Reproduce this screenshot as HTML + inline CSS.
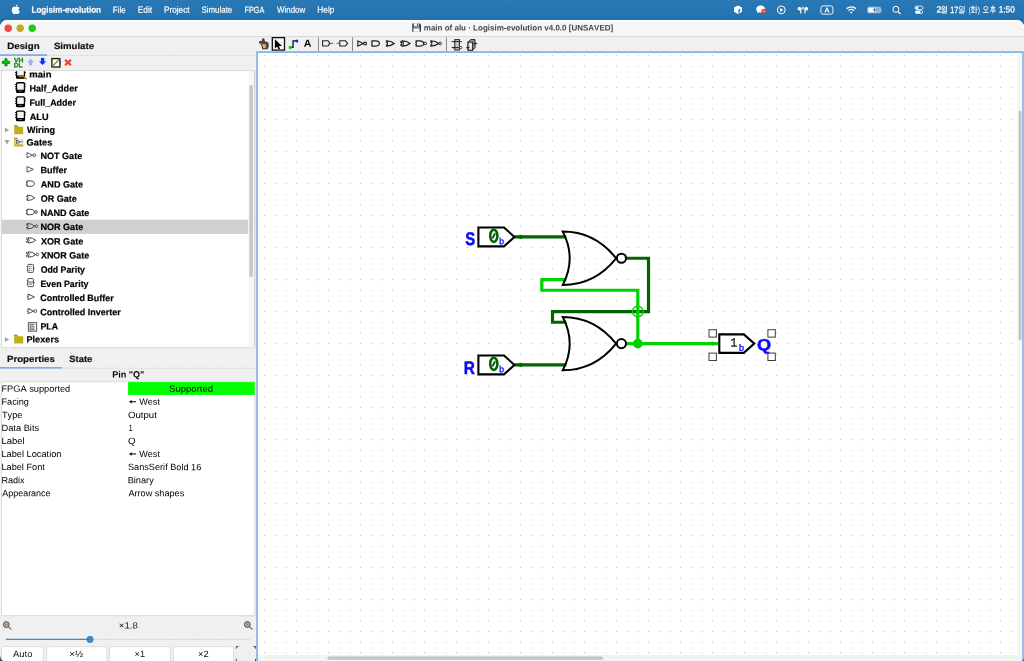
<!DOCTYPE html>
<html><head><meta charset="utf-8">
<style>
html,body{margin:0;padding:0;}
body{width:1024px;height:661px;overflow:hidden;background:#2672ae;font-family:"Liberation Sans",sans-serif;position:relative;}
svg{position:absolute;left:0;top:0;will-change:transform;}
text{font-kerning:none;}
</style></head><body>
<svg width="1024" height="661" viewBox="0 0 1024 661">
<defs><linearGradient id="mbg" x1="0" y1="0" x2="0" y2="1"><stop offset="0" stop-color="#2979b6"/><stop offset="1" stop-color="#2471ad"/></linearGradient></defs>
<rect x="0.00" y="0.00" width="1024.00" height="20.50" fill="url(#mbg)" />
<rect x="0.00" y="20.00" width="1024.00" height="641.00" fill="#2471ad" />
<path d="M0 661 V27.5 A7.5 7.5 0 0 1 7.5 20 H1016.5 A7.5 7.5 0 0 1 1024 27.5 V661 Z" fill="#f0f0f0"/>
<path d="M0 36 V27.5 A7.5 7.5 0 0 1 7.5 20 H1016.5 A7.5 7.5 0 0 1 1024 27.5 V36 Z" fill="#f5f6f5"/>
<path d="M0.5 27.5 A7 7 0 0 1 7.5 20.6 H1016.5 A7 7 0 0 1 1023.5 27.5" fill="none" stroke="#ffffff" stroke-width="1.2"/>
<rect x="0.00" y="36.00" width="1024.00" height="1.00" fill="#dadada" />
<text transform="translate(31.46 12.70) rotate(0.03) scale(0.8986 1)" font-size="9.0" font-weight="bold" fill="#fff" font-family="Liberation Sans" stroke="#fff" stroke-width="0.18">Logisim-evolution</text>
<text transform="translate(112.85 12.70) rotate(0.03) scale(0.8755 1)" font-size="9.0" font-weight="normal" fill="#fff" font-family="Liberation Sans" stroke="#fff" stroke-width="0.18">File</text>
<text transform="translate(137.72 12.70) rotate(0.03) scale(0.9249 1)" font-size="9.0" font-weight="normal" fill="#fff" font-family="Liberation Sans" stroke="#fff" stroke-width="0.18">Edit</text>
<text transform="translate(163.92 12.70) rotate(0.03) scale(0.9189 1)" font-size="9.0" font-weight="normal" fill="#fff" font-family="Liberation Sans" stroke="#fff" stroke-width="0.18">Project</text>
<text transform="translate(201.44 12.70) rotate(0.03) scale(0.8829 1)" font-size="9.0" font-weight="normal" fill="#fff" font-family="Liberation Sans" stroke="#fff" stroke-width="0.18">Simulate</text>
<text transform="translate(244.50 12.70) rotate(0.03) scale(0.8085 1)" font-size="9.0" font-weight="normal" fill="#fff" font-family="Liberation Sans" stroke="#fff" stroke-width="0.18">FPGA</text>
<text transform="translate(276.97 12.70) rotate(0.03) scale(0.8846 1)" font-size="9.0" font-weight="normal" fill="#fff" font-family="Liberation Sans" stroke="#fff" stroke-width="0.18">Window</text>
<text transform="translate(317.32 12.70) rotate(0.03) scale(0.9199 1)" font-size="9.0" font-weight="normal" fill="#fff" font-family="Liberation Sans" stroke="#fff" stroke-width="0.18">Help</text>
<text transform="translate(998.67 12.50) rotate(0.03) scale(0.9224 1)" font-size="9.0" font-weight="normal" fill="#fff" font-family="Liberation Sans" stroke="#fff" stroke-width="0.25">1:50</text>
<circle cx="8.2" cy="28.2" r="3.7" fill="#ee4b3e"/>
<circle cx="20.2" cy="28.2" r="3.7" fill="#c3a72b"/>
<circle cx="32.2" cy="28.2" r="3.7" fill="#1fc81f"/>
<text transform="translate(423.77 30.40) rotate(0.03) scale(0.9778 1)" font-size="8.2" font-weight="bold" fill="#454545" font-family="Liberation Sans" >main of alu · Logisim-evolution v4.0.0 [UNSAVED]</text>
<text transform="translate(7.25 49.00) rotate(0.03) scale(1.0782 1)" font-size="9.0" font-weight="bold" fill="#111" font-family="Liberation Sans" stroke="#111" stroke-width="0.2">Design</text>
<text transform="translate(53.92 49.00) rotate(0.03) scale(1.0705 1)" font-size="9.0" font-weight="bold" fill="#111" font-family="Liberation Sans" stroke="#111" stroke-width="0.2">Simulate</text>
<rect x="0.00" y="54.20" width="47.00" height="1.80" fill="#82aee0" />
<line x1="47" y1="55.6" x2="256" y2="55.6" stroke="#d2d2d2" stroke-width="0.8" stroke-dasharray="1.4 0.8"/>
<rect x="0.00" y="71.00" width="2.00" height="277.00" fill="#f8f8f8" />
<rect x="1.40" y="70.60" width="253.40" height="277.10" fill="#ffffff" stroke="#d6d6d6" stroke-width="0.9"/>
<rect x="1.80" y="219.75" width="246.50" height="14.17" fill="#d0d0d0" />
<rect x="248.50" y="71.00" width="5.60" height="276.30" fill="#f7f7f7" />
<rect x="249.3" y="85.1" width="3.6" height="192" rx="1.8" fill="#c6c6c6"/>
<clipPath id="treeclip"><rect x="1.5" y="71.2" width="247" height="276"/></clipPath><g clip-path="url(#treeclip)">
<text transform="translate(29.37 77.40) rotate(0.03) scale(1.0347 1)" font-size="9.2" font-weight="bold" fill="#000" font-family="Liberation Sans" stroke="#000" stroke-width="0.2">main</text>
<text transform="translate(29.39 91.60) rotate(0.03) scale(0.9850 1)" font-size="9.2" font-weight="bold" fill="#000" font-family="Liberation Sans" stroke="#000" stroke-width="0.2">Half_Adder</text>
<text transform="translate(29.40 105.70) rotate(0.03) scale(0.9684 1)" font-size="9.2" font-weight="bold" fill="#000" font-family="Liberation Sans" stroke="#000" stroke-width="0.2">Full_Adder</text>
<text transform="translate(29.77 119.90) rotate(0.03) scale(0.9935 1)" font-size="9.2" font-weight="bold" fill="#000" font-family="Liberation Sans" stroke="#000" stroke-width="0.2">ALU</text>
<text transform="translate(26.99 133.10) rotate(0.03) scale(0.9825 1)" font-size="9.2" font-weight="bold" fill="#000" font-family="Liberation Sans" stroke="#000" stroke-width="0.2">Wiring</text>
<text transform="translate(26.62 145.60) rotate(0.03) scale(1.0075 1)" font-size="9.2" font-weight="bold" fill="#000" font-family="Liberation Sans" stroke="#000" stroke-width="0.2">Gates</text>
<text transform="translate(40.39 159.10) rotate(0.03) scale(0.9880 1)" font-size="9.2" font-weight="bold" fill="#000" font-family="Liberation Sans" stroke="#000" stroke-width="0.2">NOT Gate</text>
<text transform="translate(40.39 173.30) rotate(0.03) scale(0.9873 1)" font-size="9.2" font-weight="bold" fill="#000" font-family="Liberation Sans" stroke="#000" stroke-width="0.2">Buffer</text>
<text transform="translate(40.77 187.60) rotate(0.03) scale(0.9906 1)" font-size="9.2" font-weight="bold" fill="#000" font-family="Liberation Sans" stroke="#000" stroke-width="0.2">AND Gate</text>
<text transform="translate(40.63 201.80) rotate(0.03) scale(0.9829 1)" font-size="9.2" font-weight="bold" fill="#000" font-family="Liberation Sans" stroke="#000" stroke-width="0.2">OR Gate</text>
<text transform="translate(40.39 215.90) rotate(0.03) scale(0.9865 1)" font-size="9.2" font-weight="bold" fill="#000" font-family="Liberation Sans" stroke="#000" stroke-width="0.2">NAND Gate</text>
<text transform="translate(40.39 230.10) rotate(0.03) scale(0.9877 1)" font-size="9.2" font-weight="bold" fill="#000" font-family="Liberation Sans" stroke="#000" stroke-width="0.2">NOR Gate</text>
<text transform="translate(40.92 244.40) rotate(0.03) scale(0.9871 1)" font-size="9.2" font-weight="bold" fill="#000" font-family="Liberation Sans" stroke="#000" stroke-width="0.2">XOR Gate</text>
<text transform="translate(40.92 258.60) rotate(0.03) scale(0.9757 1)" font-size="9.2" font-weight="bold" fill="#000" font-family="Liberation Sans" stroke="#000" stroke-width="0.2">XNOR Gate</text>
<text transform="translate(40.64 272.80) rotate(0.03) scale(0.9546 1)" font-size="9.2" font-weight="bold" fill="#000" font-family="Liberation Sans" stroke="#000" stroke-width="0.2">Odd Parity</text>
<text transform="translate(40.41 286.90) rotate(0.03) scale(0.9606 1)" font-size="9.2" font-weight="bold" fill="#000" font-family="Liberation Sans" stroke="#000" stroke-width="0.2">Even Parity</text>
<text transform="translate(40.23 301.10) rotate(0.03) scale(0.9717 1)" font-size="9.2" font-weight="bold" fill="#000" font-family="Liberation Sans" stroke="#000" stroke-width="0.2">Controlled Buffer</text>
<text transform="translate(40.23 315.30) rotate(0.03) scale(0.9782 1)" font-size="9.2" font-weight="bold" fill="#000" font-family="Liberation Sans" stroke="#000" stroke-width="0.2">Controlled Inverter</text>
<text transform="translate(40.41 329.50) rotate(0.03) scale(0.9577 1)" font-size="9.2" font-weight="bold" fill="#000" font-family="Liberation Sans" stroke="#000" stroke-width="0.2">PLA</text>
<text transform="translate(26.39 342.60) rotate(0.03) scale(0.9985 1)" font-size="9.2" font-weight="bold" fill="#000" font-family="Liberation Sans" stroke="#000" stroke-width="0.2">Plexers</text>
</g>
<rect x="254.20" y="71.00" width="0.90" height="276.50" fill="#d2d2d2" />
<text transform="translate(6.95 362.00) rotate(0.03) scale(1.0770 1)" font-size="9.0" font-weight="bold" fill="#111" font-family="Liberation Sans" stroke="#111" stroke-width="0.2">Properties</text>
<text transform="translate(69.23 362.00) rotate(0.03) scale(1.0494 1)" font-size="9.0" font-weight="bold" fill="#111" font-family="Liberation Sans" stroke="#111" stroke-width="0.2">State</text>
<rect x="0.00" y="367.00" width="62.00" height="1.70" fill="#82aee0" />
<line x1="62" y1="368.2" x2="256" y2="368.2" stroke="#d2d2d2" stroke-width="0.8" stroke-dasharray="1.4 0.8"/>
<text transform="translate(112.20 377.60) rotate(0.03) scale(0.9817 1)" font-size="9.2" font-weight="bold" fill="#000" font-family="Liberation Sans" >Pin &quot;Q&quot;</text>
<rect x="0.00" y="382.00" width="2.00" height="233.50" fill="#f8f8f8" />
<rect x="1.40" y="381.70" width="253.40" height="234.00" fill="#ffffff" stroke="#d6d6d6" stroke-width="0.9"/>
<rect x="128.10" y="382.10" width="126.60" height="12.80" fill="#00ff00" />
<text transform="translate(1.44 391.80) rotate(0.03) scale(1.0174 1)" font-size="9.1" font-weight="normal" fill="#000" font-family="Liberation Sans" >FPGA supported</text>
<text transform="translate(169.07 391.80) rotate(0.03) scale(1.0489 1)" font-size="9.1" font-weight="normal" fill="#000" font-family="Liberation Sans" >Supported</text>
<text transform="translate(1.45 404.85) rotate(0.03) scale(1.0085 1)" font-size="9.1" font-weight="normal" fill="#000" font-family="Liberation Sans" >Facing</text>
<text transform="translate(139.26 404.85) rotate(0.03) scale(0.9990 1)" font-size="9.1" font-weight="normal" fill="#000" font-family="Liberation Sans" >West</text>
<path d="M129 401.75 L131.6 399.95 V403.55 Z" fill="#000"/><line x1="131" y1="401.75" x2="136.1" y2="401.75" stroke="#000" stroke-width="1"/>
<text transform="translate(1.99 417.90) rotate(0.03) scale(1.0091 1)" font-size="9.1" font-weight="normal" fill="#000" font-family="Liberation Sans" >Type</text>
<text transform="translate(127.94 417.90) rotate(0.03) scale(1.0626 1)" font-size="9.1" font-weight="normal" fill="#000" font-family="Liberation Sans" >Output</text>
<text transform="translate(1.44 430.95) rotate(0.03) scale(1.0211 1)" font-size="9.1" font-weight="normal" fill="#000" font-family="Liberation Sans" >Data Bits</text>
<text transform="translate(128.67 430.95) rotate(0.03) scale(0.7646 1)" font-size="9.1" font-weight="normal" fill="#000" font-family="Liberation Sans" >1</text>
<text transform="translate(1.42 444.00) rotate(0.03) scale(1.0473 1)" font-size="9.1" font-weight="normal" fill="#000" font-family="Liberation Sans" >Label</text>
<text transform="translate(127.94 444.00) rotate(0.03) scale(1.0625 1)" font-size="9.1" font-weight="normal" fill="#000" font-family="Liberation Sans" >Q</text>
<text transform="translate(1.44 457.05) rotate(0.03) scale(1.0145 1)" font-size="9.1" font-weight="normal" fill="#000" font-family="Liberation Sans" >Label Location</text>
<text transform="translate(139.26 457.05) rotate(0.03) scale(0.9990 1)" font-size="9.1" font-weight="normal" fill="#000" font-family="Liberation Sans" >West</text>
<path d="M129 453.95 L131.6 452.15 V455.75 Z" fill="#000"/><line x1="131" y1="453.95" x2="136.1" y2="453.95" stroke="#000" stroke-width="1"/>
<text transform="translate(1.44 470.10) rotate(0.03) scale(1.0121 1)" font-size="9.1" font-weight="normal" fill="#000" font-family="Liberation Sans" >Label Font</text>
<text transform="translate(127.98 470.10) rotate(0.03) scale(1.0079 1)" font-size="9.1" font-weight="normal" fill="#000" font-family="Liberation Sans" >SansSerif Bold 16</text>
<text transform="translate(1.45 483.15) rotate(0.03) scale(0.9991 1)" font-size="9.1" font-weight="normal" fill="#000" font-family="Liberation Sans" >Radix</text>
<text transform="translate(127.64 483.15) rotate(0.03) scale(1.0148 1)" font-size="9.1" font-weight="normal" fill="#000" font-family="Liberation Sans" >Binary</text>
<text transform="translate(2.18 496.20) rotate(0.03) scale(0.9876 1)" font-size="9.1" font-weight="normal" fill="#000" font-family="Liberation Sans" >Appearance</text>
<text transform="translate(128.38 496.20) rotate(0.03) scale(1.0056 1)" font-size="9.1" font-weight="normal" fill="#000" font-family="Liberation Sans" >Arrow shapes</text>
<rect x="257.10" y="52.10" width="765.80" height="612.00" fill="#ffffff" stroke="#88b4e2" stroke-width="1.8"/>
<defs><pattern id="grid" x="264.000" y="55.100" width="10.6667" height="10.6667" patternUnits="userSpaceOnUse"><rect x="0" y="0" width="1.05" height="1.05" fill="#c2c2c2"/></pattern></defs>
<rect x="258" y="53" width="759" height="602" fill="url(#grid)"/>
<rect x="1017.00" y="53.00" width="5.20" height="602.00" fill="#f6f6f6" />
<rect x="1018.6" y="110.4" width="3" height="229.6" rx="1.5" fill="#c4c4c4"/>
<rect x="258.00" y="655.00" width="764.20" height="6.00" fill="#f3f3f3" />
<rect x="327.4" y="656.6" width="275.6" height="3.2" rx="1.6" fill="#c4c4c4"/>
<path d="M516.00 236.93 L564.67 236.93" stroke="#006400" fill="none" stroke-width="3.2" stroke-linecap="square" stroke-linejoin="miter"/>
<circle cx="520.50" cy="236.93" r="2.1" fill="#006400"/>
<path d="M516.00 364.93 L564.67 364.93" stroke="#006400" fill="none" stroke-width="3.2" stroke-linecap="square" stroke-linejoin="miter"/>
<circle cx="520.50" cy="364.93" r="2.1" fill="#006400"/>
<path d="M627.17 258.27 L648.50 258.27 L648.50 311.60 L552.50 311.60 L552.50 322.27 L564.67 322.27" stroke="#006400" fill="none" stroke-width="3.2" stroke-linecap="square" stroke-linejoin="miter"/>
<path d="M627.17 343.60 L718.00 343.60" stroke="#00d200" fill="none" stroke-width="3.2" stroke-linecap="square" stroke-linejoin="miter"/>
<path d="M637.83 343.60 L637.83 290.27 L541.83 290.27 L541.83 279.60 L564.67 279.60" stroke="#00d200" fill="none" stroke-width="3.2" stroke-linecap="square" stroke-linejoin="miter"/>
<circle cx="637.83" cy="343.60" r="4.9" fill="#00d200"/>
<circle cx="637.83" cy="311.60" r="5.3" fill="none" stroke="#00d200" stroke-width="1.4"/>
<circle cx="712.50" cy="343.60" r="2.1" fill="#00d200"/>
<path d="M616.10 258.27 Q594.77 231.60 562.77 231.60 Q576.63 258.27 562.77 284.93 Q594.77 284.93 616.10 258.27 Z" stroke="#000" fill="none" stroke-width="2.0" stroke-linejoin="miter"/>
<circle cx="621.43" cy="258.27" r="4.6" fill="#fff" stroke="#000" stroke-width="2.0"/>
<path d="M616.10 343.60 Q594.77 316.93 562.77 316.93 Q576.63 343.60 562.77 370.27 Q594.77 370.27 616.10 343.60 Z" stroke="#000" fill="none" stroke-width="2.0" stroke-linejoin="miter"/>
<circle cx="621.43" cy="343.60" r="4.6" fill="#fff" stroke="#000" stroke-width="2.0"/>
<path d="M478.4 227.53 H504.0 L514.4 236.93 L504.0 246.33 H478.4 Z" stroke="#000" fill="#fff" stroke-width="2.1" stroke-linejoin="miter"/>
<ellipse cx="493.8" cy="235.83" rx="3.6" ry="6.1" fill="#fff" stroke="#006400" stroke-width="2.6"/>
<line x1="492.6" y1="238.33" x2="495.0" y2="233.33" stroke="#006400" stroke-width="2.1"/>
<text transform="translate(499.24 244.13) rotate(0.03) scale(0.9636 1)" font-size="9" font-weight="normal" fill="#0a0aff" font-family="Liberation Sans" stroke="#0a0aff" stroke-width="0.35">b</text>
<text transform="translate(465.37 245.30) rotate(0.03) scale(0.8118 1)" font-size="18.3" font-weight="bold" fill="#0a0aff" font-family="Liberation Sans" stroke="#0a0aff" stroke-width="0.5">S</text>
<path d="M478.4 355.53 H504.0 L514.4 364.93 L504.0 374.33 H478.4 Z" stroke="#000" fill="#fff" stroke-width="2.1" stroke-linejoin="miter"/>
<ellipse cx="493.8" cy="363.83" rx="3.6" ry="6.1" fill="#fff" stroke="#006400" stroke-width="2.6"/>
<line x1="492.6" y1="366.33" x2="495.0" y2="361.33" stroke="#006400" stroke-width="2.1"/>
<text transform="translate(499.24 372.13) rotate(0.03) scale(0.9636 1)" font-size="9" font-weight="normal" fill="#0a0aff" font-family="Liberation Sans" stroke="#0a0aff" stroke-width="0.35">b</text>
<text transform="translate(463.87 373.60) rotate(0.03) scale(0.8436 1)" font-size="18.3" font-weight="bold" fill="#0a0aff" font-family="Liberation Sans" stroke="#0a0aff" stroke-width="0.5">R</text>
<path d="M719.3 334.35 H743.8 L754.3 343.60 L743.8 352.85 H719.3 Z" stroke="#000" fill="#fff" stroke-width="2.1" stroke-linejoin="miter"/>
<text transform="translate(730.50 346.60) rotate(0.03) scale(0.8773 1)" font-size="12.6" font-weight="normal" fill="#222" font-family="Liberation Mono" stroke="#222" stroke-width="0.4">1</text>
<text transform="translate(739.01 350.70) rotate(0.03) scale(1.0130 1)" font-size="9" font-weight="normal" fill="#0a0aff" font-family="Liberation Sans" stroke="#0a0aff" stroke-width="0.35">b</text>
<text transform="translate(757.06 350.50) rotate(0.03) scale(1.0924 1)" font-size="16.6" font-weight="bold" fill="#0a0aff" font-family="Liberation Sans" stroke="#0a0aff" stroke-width="0.5">Q</text>
<rect x="709.00" y="329.70" width="7.40" height="7.40" fill="#fff" stroke="#3c3c3c" stroke-width="1"/>
<rect x="709.00" y="353.10" width="7.40" height="7.40" fill="#fff" stroke="#3c3c3c" stroke-width="1"/>
<rect x="767.90" y="329.70" width="7.40" height="7.40" fill="#fff" stroke="#3c3c3c" stroke-width="1"/>
<rect x="767.90" y="353.10" width="7.40" height="7.40" fill="#fff" stroke="#3c3c3c" stroke-width="1"/>
<g>
<path d="M261.8 44.6 L260 43.2 Q259 42.2 259.8 41.6 Q260.6 41.1 261.6 42 L262.5 42.9 V39.8 Q262.5 38.7 263.3 38.7 Q264.1 38.7 264.1 39.8 V42 Q265 41.5 265.6 42.3 Q266.6 41.9 267 42.8 Q268 42.7 268.1 43.8 V46.2 Q268 47.6 267.2 48.8 H262.8 Q262.2 46.6 261.8 44.6 Z" fill="#5a5040" stroke="#3a3a3a" stroke-width="1.1"/>
<path d="M262.2 44.2 H265.6 V48 H263.2 Z" fill="#e8b866"/>
<path d="M260.6 42.6 L262 44" stroke="#e0b060" stroke-width="0.7"/>
</g>
<rect x="272.30" y="37.60" width="12.20" height="12.50" fill="#f6f6f6" stroke="#111" stroke-width="1.3"/>
<path d="M274.9 39.2 V48.4 L277.2 46.5 L278.6 49.5 L280.1 48.8 L278.8 45.9 L282 45.9 Z" fill="#000"/>
<path d="M290.3 47.4 H293 V40.9 H296.8" fill="none" stroke="#111" stroke-width="1.3"/>
<circle cx="290.3" cy="47.4" r="1.7" fill="#00d200"/><circle cx="296.8" cy="40.9" r="1.5" fill="#0a1eff"/>
<text transform="translate(303.74 46.70) rotate(0.03) scale(1.0375 1)" font-size="10.2" font-weight="bold" fill="#000" font-family="Liberation Sans" >A</text>
<rect x="317.95" y="37.30" width="0.90" height="13.70" fill="#7c7c7c" />
<rect x="352.05" y="37.30" width="0.90" height="13.70" fill="#7c7c7c" />
<rect x="445.95" y="37.30" width="0.90" height="13.70" fill="#7c7c7c" />
<path d="M322.6 40.8 H328 L329.8 43.4 L328 46 H322.6 Z" fill="none" stroke="#222" stroke-width="1.1"/>
<line x1="330" y1="43.4" x2="333.2" y2="43.4" stroke="#00d200" stroke-width="1.3"/>
<line x1="336.6" y1="43.4" x2="339.6" y2="43.4" stroke="#00d200" stroke-width="1.3"/>
<path d="M339.8 40.8 H345.5 L347.6 43.4 L345.5 46 H339.8 Z" fill="none" stroke="#222" stroke-width="1.1"/>
<path d="M357.8 40.9 L363.40000000000003 43.5 L357.8 46.1 Z" fill="none" stroke="#1e1e1e" stroke-width="1.05"/><circle cx="365.1" cy="43.5" r="1.4" fill="none" stroke="#1e1e1e" stroke-width="1.05"/>
<path d="M372 40.9 H375.2 Q379.4 40.9 379.4 43.5 Q379.4 46.1 375.2 46.1 H372 Z" fill="none" stroke="#1e1e1e" stroke-width="1.1"/>
<path d="M386.6 40.9 Q391.20000000000005 40.9 394.20000000000005 43.5 Q391.20000000000005 46.1 386.6 46.1 Q388.40000000000003 43.5 386.6 40.9 Z" fill="none" stroke="#1e1e1e" stroke-width="1.1"/>
<path d="M402.4 40.9 Q407.0 40.9 410.0 43.5 Q407.0 46.1 402.4 46.1 Q404.2 43.5 402.4 40.9 Z" fill="none" stroke="#1e1e1e" stroke-width="1.1"/>
<path d="M400.79999999999995 40.9 Q402.59999999999997 43.5 400.79999999999995 46.1" fill="none" stroke="#1e1e1e" stroke-width="1.1"/>
<path d="M416.2 40.9 H419.4 Q423.59999999999997 40.9 423.59999999999997 43.5 Q423.59999999999997 46.1 419.4 46.1 H416.2 Z" fill="none" stroke="#1e1e1e" stroke-width="1.1"/>
<circle cx="425.2" cy="43.5" r="1.3" fill="none" stroke="#1e1e1e" stroke-width="0.9900000000000001"/>
<path d="M431 40.9 Q435.6 40.9 438.6 43.5 Q435.6 46.1 431 46.1 Q432.8 43.5 431 40.9 Z" fill="none" stroke="#1e1e1e" stroke-width="1.1"/>
<circle cx="440.1" cy="43.5" r="1.3" fill="none" stroke="#1e1e1e" stroke-width="0.9900000000000001"/>
<path d="M371 42.2 h1 M371 44.8 h1 M385.8 42.2 h1.4 M385.8 44.8 h1.4 M415.2 42.2 h1 M415.2 44.8 h1 M430.2 42.2 h1.4 M430.2 44.8 h1.4 M400 42.2 h1.4 M400 44.8 h1.4" stroke="#1e1e1e" stroke-width="0.9"/>
<g stroke="#222" fill="none">
<rect x="454.8" y="39.6" width="4.6" height="10.4" fill="#c8c8c8" stroke-width="1"/>
<line x1="451.6" y1="41.6" x2="461.8" y2="41.6" stroke-width="1"/>
<line x1="451.6" y1="47.6" x2="459.4" y2="47.6" stroke-width="1"/>
<path d="M453.2 46.4 L455 47.6 L453.2 48.8 Z" fill="#222" stroke="none"/>
<circle cx="460.7" cy="47.6" r="1.2" fill="#fff" stroke-width="0.8"/>
</g>
<g stroke="#222" fill="none">
<path d="M468 42.2 L470.6 39.6 H475 V47.6 L472.6 50.2 H468 Z" fill="#9a9a9a" stroke-width="1"/>
<rect x="468" y="42.2" width="4.6" height="8" fill="#e8e8e8" stroke-width="1"/>
<line x1="466.2" y1="47.7" x2="469.4" y2="47.7" stroke-width="1"/>
<path d="M467.8 46.6 L469.5 47.7 L467.8 48.8 Z" fill="#222" stroke="none"/>
<line x1="473.4" y1="43.6" x2="477" y2="43.6" stroke-width="1"/>
<path d="M475.4 42.5 L477.2 43.6 L475.4 44.7 Z" fill="#222" stroke="none"/>
</g>
<path d="M4.9 58.7 H7.1 V61.2 H9.7 V63.4 H7.1 V65.9 H4.9 V63.4 H2.3 V61.2 H4.9 Z" fill="#00c800" stroke="#0a6a0a" stroke-width="0.7"/>
<text transform="translate(13.95 62.30) rotate(0.03) scale(1.0864 1)" font-size="6.3" font-weight="bold" fill="#1e8c1e" font-family="Liberation Sans" stroke="#1e8c1e" stroke-width="0.3">VH</text>
<text transform="translate(13.76 67.20) rotate(0.03) scale(1.0536 1)" font-size="6.3" font-weight="bold" fill="#1e8c1e" font-family="Liberation Sans" stroke="#1e8c1e" stroke-width="0.3">DL</text>
<path d="M30.7 58.8 L34.2 62.2 H32.2 V65.6 H29.2 V62.2 H27.2 Z" fill="#8fb6ee"/>
<path d="M40.9 58.1 H44.3 V61.4 H46.2 L42.6 65.1 L39 61.4 H40.9 Z" fill="#0a32ff"/>
<rect x="51.90" y="58.60" width="8.00" height="8.40" fill="#fff" stroke="#111" stroke-width="1.3"/>
<line x1="52.2" y1="66.6" x2="59.6" y2="59" stroke="#a0641e" stroke-width="1.1"/>
<circle cx="52.4" cy="62.8" r="0.8" fill="#00c800"/><rect x="59.3" y="60.2" width="1" height="3.8" fill="#0a32ff"/>
<path d="M65.9 58.9 L68 60.9 L70.1 58.9 L71.7 60.5 L69.7 62.5 L71.7 64.5 L70.1 66.1 L68 64.1 L65.9 66.1 L64.3 64.5 L66.3 62.5 L64.3 60.5 Z" fill="#f04232"/>
<g clip-path="url(#treeclip)">
<g><rect x="16.55" y="68.55000000000001" width="7.9" height="9.6" rx="1" fill="#f4f4f4" stroke="#000" stroke-width="1.3"/><rect x="16.5" y="75.5" width="8" height="2.8" fill="#000"/><rect x="18.5" y="76.5" width="3.8" height="0.7" fill="#8c8c8c"/><rect x="15.0" y="69.7" width="1.2" height="0.9" fill="#000"/><rect x="15.0" y="72.10000000000001" width="1.2" height="0.9" fill="#000"/><rect x="15.0" y="74.4" width="1.2" height="0.9" fill="#000"/><rect x="24.8" y="69.5" width="1.0" height="0.9" fill="#000"/><rect x="24.8" y="71.9" width="1.0" height="0.9" fill="#000"/></g>
<path d="M19.2 76.4 H23.6 L26.7 79.2" fill="none" stroke="#b87214" stroke-width="1.3"/>
<g><rect x="16.55" y="82.75" width="7.9" height="9.6" rx="1" fill="#f4f4f4" stroke="#000" stroke-width="1.3"/><rect x="16.5" y="89.69999999999999" width="8" height="2.8" fill="#000"/><rect x="18.5" y="90.69999999999999" width="3.8" height="0.7" fill="#8c8c8c"/><rect x="15.0" y="83.89999999999999" width="1.2" height="0.9" fill="#000"/><rect x="15.0" y="86.3" width="1.2" height="0.9" fill="#000"/><rect x="15.0" y="88.6" width="1.2" height="0.9" fill="#000"/><rect x="24.8" y="83.69999999999999" width="1.0" height="0.9" fill="#000"/><rect x="24.8" y="86.1" width="1.0" height="0.9" fill="#000"/></g>
<g><rect x="16.55" y="96.95" width="7.9" height="9.6" rx="1" fill="#f4f4f4" stroke="#000" stroke-width="1.3"/><rect x="16.5" y="103.89999999999999" width="8" height="2.8" fill="#000"/><rect x="18.5" y="104.89999999999999" width="3.8" height="0.7" fill="#8c8c8c"/><rect x="15.0" y="98.1" width="1.2" height="0.9" fill="#000"/><rect x="15.0" y="100.5" width="1.2" height="0.9" fill="#000"/><rect x="15.0" y="102.8" width="1.2" height="0.9" fill="#000"/><rect x="24.8" y="97.89999999999999" width="1.0" height="0.9" fill="#000"/><rect x="24.8" y="100.3" width="1.0" height="0.9" fill="#000"/></g>
<g><rect x="16.55" y="111.05000000000001" width="7.9" height="9.6" rx="1" fill="#f4f4f4" stroke="#000" stroke-width="1.3"/><rect x="16.5" y="118.0" width="8" height="2.8" fill="#000"/><rect x="18.5" y="119.0" width="3.8" height="0.7" fill="#8c8c8c"/><rect x="15.0" y="112.2" width="1.2" height="0.9" fill="#000"/><rect x="15.0" y="114.60000000000001" width="1.2" height="0.9" fill="#000"/><rect x="15.0" y="116.9" width="1.2" height="0.9" fill="#000"/><rect x="24.8" y="112.0" width="1.0" height="0.9" fill="#000"/><rect x="24.8" y="114.4" width="1.0" height="0.9" fill="#000"/></g>
<path d="M14.2 125.60000000000001 H17.4 L18.4 126.8 H23.2 V134.2 H14.2 Z" fill="#c3ae1a"/>
<path d="M14.2 125.8 H17.2" stroke="#a05a14" stroke-width="0.8"/>
<path d="M14.2 335.0 H17.4 L18.4 336.20000000000005 H23.2 V343.6 H14.2 Z" fill="#c3ae1a"/>
<path d="M14.2 335.20000000000005 H17.2" stroke="#a05a14" stroke-width="0.8"/>
<path d="M14.2 347.59999999999997 H17.4 L18.4 348.8 H23.2 V356.2 H14.2 Z" fill="#c3ae1a"/>
<path d="M14.2 347.8 H17.2" stroke="#a05a14" stroke-width="0.8"/>
<path d="M14.2 138.0 H17.4 L18.4 139.2 H23.2 V146.6 H14.2 Z" fill="#c3ae1a"/>
<path d="M14.2 138.2 H17.2" stroke="#a05a14" stroke-width="0.8"/>
<rect x="15.40" y="139.20" width="7.20" height="5.20" fill="#f0f0f0" />
<path d="M16.6 140 L20.2 141.8 L16.6 143.6 Z M20.6 141.8 h1.6" fill="none" stroke="#333" stroke-width="0.8"/>
<path d="M4.8 127.4 L9.2 130 L4.8 132.6 Z" fill="#a2a2a2"/>
<path d="M4.4 139.9 H9.6 L7 144.4 Z" fill="#a2a2a2"/>
<path d="M4.8 336.9 L9.2 339.5 L4.8 342.1 Z" fill="#a2a2a2"/>
<path d="M27.0 152.6 L32.6 155.2 L27.0 157.79999999999998 Z" fill="none" stroke="#3a3a3a" stroke-width="0.85"/><circle cx="34.3" cy="155.2" r="1.4" fill="none" stroke="#3a3a3a" stroke-width="0.85"/>
<path d="M27.0 166.6 L33.4 169.4 L27.0 172.20000000000002 Z" fill="none" stroke="#3a3a3a" stroke-width="0.85"/>
<path d="M27.0 180.9 H30.2 Q34.4 180.9 34.4 183.6 Q34.4 186.29999999999998 30.2 186.29999999999998 H27.0 Z" fill="none" stroke="#3a3a3a" stroke-width="0.95"/>
<path d="M27.2 195.10000000000002 Q31.799999999999997 195.10000000000002 34.8 197.8 Q31.799999999999997 200.5 27.2 200.5 Q29.0 197.8 27.2 195.10000000000002 Z" fill="none" stroke="#3a3a3a" stroke-width="0.95"/>
<path d="M27.0 209.3 H30.2 Q34.4 209.3 34.4 212.0 Q34.4 214.7 30.2 214.7 H27.0 Z" fill="none" stroke="#3a3a3a" stroke-width="0.95"/>
<circle cx="36.0" cy="212.0" r="1.3" fill="none" stroke="#3a3a3a" stroke-width="0.855"/>
<path d="M27.2 223.5 Q31.799999999999997 223.5 34.8 226.2 Q31.799999999999997 228.89999999999998 27.2 228.89999999999998 Q29.0 226.2 27.2 223.5 Z" fill="none" stroke="#3a3a3a" stroke-width="0.95"/>
<circle cx="36.3" cy="226.2" r="1.3" fill="none" stroke="#3a3a3a" stroke-width="0.855"/>
<path d="M28.2 237.60000000000002 Q32.8 237.60000000000002 35.8 240.3 Q32.8 243.0 28.2 243.0 Q30.0 240.3 28.2 237.60000000000002 Z" fill="none" stroke="#3a3a3a" stroke-width="0.95"/>
<path d="M26.599999999999998 237.60000000000002 Q28.4 240.3 26.599999999999998 243.0" fill="none" stroke="#3a3a3a" stroke-width="0.95"/>
<path d="M28.2 251.8 Q32.8 251.8 35.8 254.5 Q32.8 257.2 28.2 257.2 Q30.0 254.5 28.2 251.8 Z" fill="none" stroke="#3a3a3a" stroke-width="0.95"/>
<path d="M26.599999999999998 251.8 Q28.4 254.5 26.599999999999998 257.2" fill="none" stroke="#3a3a3a" stroke-width="0.95"/>
<circle cx="37.3" cy="254.5" r="1.3" fill="none" stroke="#3a3a3a" stroke-width="0.855"/>
<path d="M25.9 182.29999999999998 h1.4 M25.9 184.9 h1.4" stroke="#3a3a3a" stroke-width="0.8"/>
<path d="M25.9 196.5 h1.4 M25.9 199.10000000000002 h1.4" stroke="#3a3a3a" stroke-width="0.8"/>
<path d="M25.9 210.7 h1.4 M25.9 213.3 h1.4" stroke="#3a3a3a" stroke-width="0.8"/>
<path d="M25.9 224.89999999999998 h1.4 M25.9 227.5 h1.4" stroke="#3a3a3a" stroke-width="0.8"/>
<path d="M25.9 239.0 h1.4 M25.9 241.60000000000002 h1.4" stroke="#3a3a3a" stroke-width="0.8"/>
<path d="M25.9 253.2 h1.4 M25.9 255.8 h1.4" stroke="#3a3a3a" stroke-width="0.8"/>
<rect x="27.8" y="264.4" width="5.6" height="8" rx="0.8" fill="#fff" stroke="#3a3a3a" stroke-width="0.9"/>
<path d="M26.6 266.59999999999997 h1.2 M26.6 270.0 h1.2 M33.4 268.4 h1.4" stroke="#3a3a3a" stroke-width="0.8"/>
<path d="M29.0 266.4 h3.2 M29.0 268.4 h3.2 M29.0 270.4 h3.2" stroke="#3a3a3a" stroke-width="0.8" stroke-dasharray="1 0.6"/>
<rect x="27.8" y="278.6" width="5.6" height="8" rx="0.8" fill="#fff" stroke="#3a3a3a" stroke-width="0.9"/>
<path d="M26.6 280.8 h1.2 M26.6 284.20000000000005 h1.2 M33.4 282.6 h1.4" stroke="#3a3a3a" stroke-width="0.8"/>
<path d="M28.2 282.0 h4.8 M29.2 284.0 h2.8" stroke="#3a3a3a" stroke-width="0.8"/>
<path d="M26.8 296.9 h1.2 M29.4 294 v1.4" stroke="#3a3a3a" stroke-width="0.8"/>
<path d="M28.0 294.09999999999997 L34.4 296.9 L28.0 299.7 Z" fill="none" stroke="#3a3a3a" stroke-width="0.85"/>
<path d="M26.8 311.1 h1.2 M29.4 308.2 v1.4" stroke="#3a3a3a" stroke-width="0.8"/>
<path d="M28.0 308.5 L33.6 311.1 L28.0 313.70000000000005 Z" fill="none" stroke="#3a3a3a" stroke-width="0.85"/><circle cx="35.3" cy="311.1" r="1.4" fill="none" stroke="#3a3a3a" stroke-width="0.85"/>
<rect x="28.40" y="322.60" width="8.20" height="8.60" fill="#f2f2f2" stroke="#6a6a6a" stroke-width="1.1"/>
<path d="M31 324.4 h3.4 M31 326.2 h3.4 M31 328 h3.4 M31 329.6 h3.4 M30.2 323.6 v6.8" stroke="#5a5a5a" stroke-width="0.9"/>
</g>
<line x1="8.5" y1="626.8000000000001" x2="11.5" y2="629.6" stroke="#a86a18" stroke-width="1.2"/>
<circle cx="6.3" cy="624.6" r="2.9" fill="#b4b4b4" stroke="#3c3c3c" stroke-width="0.9"/>
<circle cx="6.3" cy="624.6" r="1.2" fill="#8a8a8a"/>
<line x1="249.5" y1="626.7" x2="252.5" y2="629.5" stroke="#a86a18" stroke-width="1.2"/>
<circle cx="247.3" cy="624.5" r="2.9" fill="#b4b4b4" stroke="#3c3c3c" stroke-width="0.9"/>
<circle cx="247.3" cy="624.5" r="1.2" fill="#8a8a8a"/>
<text transform="translate(118.83 628.40) rotate(0.03) scale(1.0745 1)" font-size="9.0" font-weight="normal" fill="#111" font-family="Liberation Sans" >×1.8</text>
<line x1="6" y1="639.4" x2="88" y2="639.4" stroke="#3f88cc" stroke-width="1.1"/>
<line x1="93" y1="639.4" x2="250" y2="639.4" stroke="#c4c4c4" stroke-width="0.8" stroke-dasharray="1.4 0.8"/>
<circle cx="90" cy="639.4" r="3.4" fill="#2f80c6"/><circle cx="90" cy="639.4" r="1.5" fill="none" stroke="#6aa8dc" stroke-width="0.6"/>
<rect x="1.5" y="646.6" width="41.8" height="20" rx="2.6" fill="#fff" stroke="#d9d9d9" stroke-width="0.9"/>
<text transform="translate(12.98 657.00) rotate(0.03) scale(1.0486 1)" font-size="9.0" font-weight="normal" fill="#111" font-family="Liberation Sans" >Auto</text>
<rect x="46.6" y="646.6" width="60.4" height="20" rx="2.6" fill="#fff" stroke="#d9d9d9" stroke-width="0.9"/>
<text transform="translate(69.32 657.00) rotate(0.03) scale(1.0928 1)" font-size="9.0" font-weight="normal" fill="#111" font-family="Liberation Sans" >×½</text>
<rect x="109.7" y="646.6" width="60.60000000000001" height="20" rx="2.6" fill="#fff" stroke="#d9d9d9" stroke-width="0.9"/>
<text transform="translate(134.57 657.00) rotate(0.03) scale(1.0111 1)" font-size="9.0" font-weight="normal" fill="#111" font-family="Liberation Sans" >×1</text>
<rect x="173.4" y="646.6" width="60.19999999999999" height="20" rx="2.6" fill="#fff" stroke="#d9d9d9" stroke-width="0.9"/>
<text transform="translate(198.10 657.00) rotate(0.03) scale(1.0398 1)" font-size="9.0" font-weight="normal" fill="#111" font-family="Liberation Sans" >×2</text>
<path d="M236.3 648.6 V646.6 H238.4 M253.4 646.6 H255.5 V648.6 M236.3 658.8 V661 M255.5 658.8 V661" fill="none" stroke="#444" stroke-width="1"/>
<path d="M15.9 6.9 C16.6 6.3 17.6 6.5 18.5 7 C19 7.3 19.3 7.7 19.5 8 C18.4 8.7 18.2 10.6 19.8 11.4 C19.4 12.5 18.8 13.4 18.1 13.9 C17.4 14.4 16.7 13.8 15.8 13.8 C14.9 13.8 14.3 14.4 13.5 13.9 C12.4 13.1 11.5 11.2 11.8 9.3 C12 7.9 13 6.9 14.2 6.8 C14.9 6.8 15.3 7.1 15.9 6.9 Z" fill="#fff"/>
<path d="M15.7 6.5 C15.7 5.4 16.5 4.6 17.5 4.5 C17.6 5.6 16.8 6.5 15.7 6.5 Z" fill="#fff"/>
<path d="M738 5.4 L742 7.4 V11.8 L738 14 L734 11.8 V7.4 Z" fill="#fff"/><path d="M738.4 9.8 L740.2 8.8 V10.2 L739.4 12.6 L738.4 13.2 Z" fill="#2672ae"/>
<path d="M756.2 9 C756.2 6.9 758.2 5.5 760.6 5.5 C763.2 5.5 765.2 7 765.2 9 C765.2 11 763.3 12.4 760.8 12.4 C760.2 12.4 759.7 12.3 759.2 12.2 L757 13.3 L757.5 11.6 C756.7 11 756.2 10 756.2 9 Z" fill="#fff"/>
<circle cx="763.8" cy="11.3" r="2.5" fill="#e8402c"/><rect x="762.5" y="10.8" width="2.6" height="1" rx="0.4" fill="#f6c0b4"/>
<circle cx="781.3" cy="9.9" r="3.9" fill="none" stroke="#fff" stroke-width="1"/><path d="M780.1 7.9 L783.4 9.9 L780.1 11.9 Z" fill="#fff"/>
<g fill="#fff"><rect x="797.6" y="7" width="3.6" height="3.4" rx="1.6"/><rect x="800.2" y="7.6" width="1.2" height="6" rx="0.6"/><rect x="804.6" y="7" width="3.6" height="3.4" rx="1.6"/><rect x="804.4" y="7.6" width="1.2" height="6" rx="0.6"/><rect x="802.2" y="6.4" width="1.3" height="3.2" rx="0.6"/></g>
<rect x="820.9" y="5.9" width="12" height="8.3" rx="2.2" fill="none" stroke="#fff" stroke-width="0.9"/>
<text transform="translate(824.21 12.60) rotate(0.03) scale(1.1179 1)" font-size="6.8" font-weight="bold" fill="#ffffff" font-family="Liberation Sans" >A</text>
<g fill="none" stroke="#fff" stroke-linecap="butt"><path d="M846.6 8.8 A6.6 6.6 0 0 1 856 8.8" stroke-width="1.4"/><path d="M848.5 10.6 A4 4 0 0 1 854.1 10.6" stroke-width="1.3"/></g><circle cx="851.3" cy="12.4" r="1" fill="#fff"/>
<rect x="867.6" y="7" width="13.2" height="5.9" rx="1.6" fill="#ffffff" fill-opacity="0.45" stroke="#fff" stroke-opacity="0.6" stroke-width="0.6"/><rect x="868.3" y="7.7" width="7.4" height="4.5" rx="1" fill="#fff"/><path d="M881.6 8.8 Q882.6 9.9 881.6 11.1 Z" fill="#fff" fill-opacity="0.6"/>
<path d="M874.9 7.2 L872.8 10.3 H874.4 L873.7 12.8 L876.2 9.5 H874.6 Z" fill="#2a5e8c"/>
<circle cx="895.9" cy="9.3" r="3" fill="none" stroke="#fff" stroke-width="1"/><line x1="898.1" y1="11.6" x2="900.6" y2="14" stroke="#fff" stroke-width="1.1"/>
<g><rect x="915" y="6.1" width="8" height="3.4" rx="1.7" fill="none" stroke="#fff" stroke-width="0.8"/><circle cx="917" cy="7.8" r="1.3" fill="#fff"/><rect x="915" y="10.4" width="8" height="3.4" rx="1.7" fill="#fff"/><circle cx="921.1" cy="12.1" r="1" fill="#2672ae"/></g>
<text transform="translate(936.45 12.50) rotate(0.03) scale(1.0000 1)" font-size="9.0" font-weight="normal" fill="#ffffff" font-family="Liberation Sans" stroke="#fff" stroke-width="0.25">2</text>
<text transform="translate(950.35 12.50) rotate(0.03) scale(0.8002 1)" font-size="9.0" font-weight="normal" fill="#ffffff" font-family="Liberation Sans" stroke="#fff" stroke-width="0.25">17</text>
<text transform="translate(968.65 12.70) rotate(0.03) scale(0.6578 1)" font-size="8.6" font-weight="normal" fill="#ffffff" font-family="Liberation Sans" >(</text>
<text transform="translate(977.76 12.70) rotate(0.03) scale(0.7894 1)" font-size="8.6" font-weight="normal" fill="#ffffff" font-family="Liberation Sans" >)</text>
<g transform="translate(941.2 6.0)" fill="none" stroke="#fff" stroke-width="0.85"><ellipse cx="2.1" cy="1.2" rx="1.4" ry="1.0"/><path d="M0.1 3.0 H4.3 M2.1 3.0 V4.0 M5.3 -0.2 V4.2 M4.1 1.8 H5.3"/><path d="M0.9 4.9 H5.3 V6.0 H0.9 V7.1 H5.6"/></g>
<g transform="translate(958.6 6.0)" fill="none" stroke="#fff" stroke-width="0.85"><ellipse cx="2.2" cy="1.9" rx="1.7" ry="1.6"/><path d="M5.6 -0.2 V4.2"/><path d="M0.9 4.9 H5.6 V6.0 H0.9 V7.1 H5.6"/></g>
<g transform="translate(970.7 6.0)" fill="none" stroke="#fff" stroke-width="0.85"><path d="M1.3 0.3 H3.1 M0.3 1.5 H4.1 M2.2 4.7 V6.1 M0 6.3 H4.5 M5.4 -0.2 V7.4 M5.4 3.4 H6.8"/><ellipse cx="2.2" cy="3.3" rx="1.4" ry="1.05"/></g>
<g transform="translate(982.8 6.0)" fill="none" stroke="#fff" stroke-width="0.85"><ellipse cx="3" cy="2.2" rx="2.0" ry="1.8"/><path d="M3 4.2 V6.3 M0 6.5 H6"/></g>
<g transform="translate(989.8 6.0)" fill="none" stroke="#fff" stroke-width="0.85"><path d="M2.2 0.2 H4.0 M0.7 1.4 H5.5 M0 5.0 H6.2 M3.1 5.0 V7.4"/><ellipse cx="3.1" cy="3.1" rx="1.6" ry="0.95"/></g>
<g><path d="M412.2 23.4 H420 L421 24.4 V31.8 H412.2 Z" fill="#3e3e3e"/><rect x="413.8" y="23.4" width="5.2" height="3" fill="#f4f4f4"/><rect x="413.4" y="27" width="6.2" height="1.5" fill="#4e9be0"/><rect x="413.4" y="28.5" width="6.2" height="3.3" fill="#fafafa"/><rect x="417" y="23.8" width="1.2" height="2" fill="#3e3e3e"/></g>
<path d="M0 654.5 Q0.3 661 4 661 H0 Z" fill="#4a4a4a"/>
<path d="M1024 657.5 Q1023.6 661 1021.5 661 H1024 Z" fill="#4a4a4a"/>
</svg>
</body></html>
